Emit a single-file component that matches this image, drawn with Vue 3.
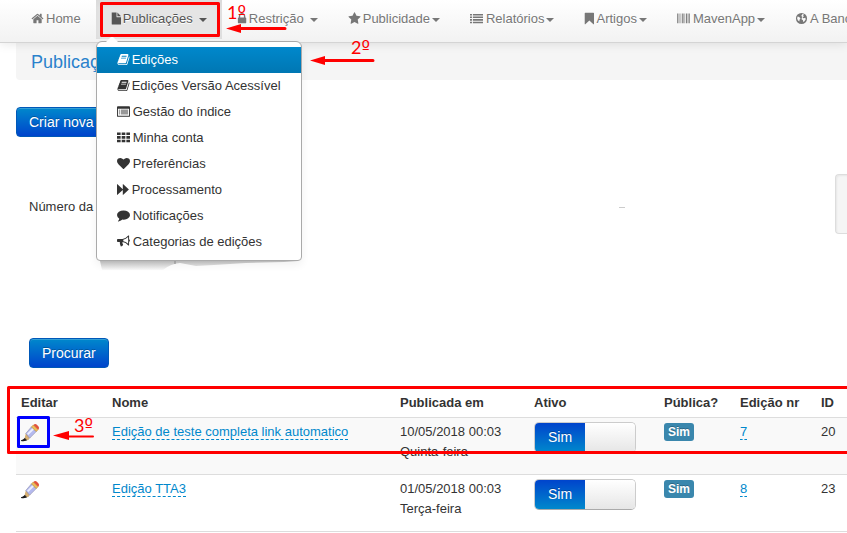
<script setup>
import { ref } from 'vue'

const glyphs = {
  home: 'M1472 992v480q0 26-19 45t-45 19h-384v-384h-256v384h-384q-26 0-45-19t-19-45v-480q0-1 .5-3t.5-3l575-474 575 474q1 2 1 6zm223-69l-62 74q-8 9-21 11h-3q-13 0-21-7l-692-577-692 577q-12 8-24 7-13-2-21-11l-62-74q-8-10-7-23.5t11-21.5l719-599q32-26 76-26t76 26l244 204v-195q0-14 9-23t23-9h192q14 0 23 9t9 23v408l219 182q10 8 11 21.5t-7 23.5z',
  file: 'M100 60H760V640Q760 720 840 720H1380V1640Q1380 1730 1290 1730H190Q100 1730 100 1640ZM880 60L1380 600H880Z',
  lock: 'M440 768h512v-192q0-106-75-181t-181-75-181 75-75 181v192zm832 96v576q0 40-28 68t-68 28h-960q-40 0-68-28t-28-68v-576q0-40 28-68t68-28h32v-192q0-184 132-316t316-132 316 132 132 316v192h32q40 0 68 28t28 68z',
  star: 'M1728 647q0 22-26 48l-363 354 86 500q1 7 1 20 0 21-10.5 35.5t-30.5 14.5q-19 0-40-12l-449-236-449 236q-22 12-40 12-21 0-31.5-14.5t-10.5-35.5q0-6 2-20l86-500-364-354q-25-27-25-48 0-37 56-46l502-73 225-455q19-41 49-41t49 41l225 455 502 73q56 9 56 46z',
  list: 'M0 260H270V470H0ZM400 260H1792V470H400ZM0 620H270V830H0ZM400 620H1792V830H400ZM0 980H270V1190H0ZM400 980H1792V1190H400ZM0 1340H270V1550H0ZM400 1340H1792V1550H400Z',
  bookmark: 'M100 180Q100 100 184 100H1294Q1380 100 1380 180V1640Q1380 1720 1294 1680L740 1170L184 1680Q100 1720 100 1640Z',
  barcode: 'M0 200H110V1550H0ZM220 200H330V1550H220ZM500 200H580V1550H500ZM720 200H900V1550H720ZM1040 200H1120V1550H1040ZM1250 200H1430V1550H1250ZM1530 200H1600V1550H1530ZM1690 200H1792V1550H1690Z',
  globe: 'M896 128A768 768 0 1 0 896 1664A768 768 0 1 0 896 128ZM1020 290L1240 360L1110 510L1230 600L1030 760L1180 850L1420 800L1480 1010L1300 1290L1130 1370L1100 1120L900 1010L940 780L1010 640L860 550ZM360 620L580 690L760 880L620 1060L600 1320L390 1140L290 850Z',
  book: 'M1703 478q40 57 18 129l-275 906q-19 64-76.5 107.5t-122.5 43.5h-923q-77 0-148.5-53.5t-99.5-131.5q-24-67-2-127 0-4 3-27t4-37q1-8-3-21.5t-3-19.5q2-11 8-21t16.5-23.5 16.5-23.5q23-38 45-91.5t30-91.5q3-10 .5-30t-.5-28q3-11 17-28t17-23q21-36 42-92t25-90q1-9-2.5-32t.5-28q4-13 22-30.5t22-22.5q19-26 42.5-84.5t27.5-96.5q1-8-3-25.5t-2-26.5q2-8 9-18t18-23 17-21q8-12 16.5-30.5t15-35 16-36 19.5-32 26.5-23.5 36-11.5 47.5 5.5l-1 3q38-9 51-9h761q74 0 114 56t18 130l-274 906q-36 119-71.5 153.5t-128.5 34.5h-869q-27 0-38 15-11 16-1 43 24 70 144 70h923q29 0 56-15.5t35-41.5l300-987q7-22 5-57 38 15 59 43zm-1064 2q-4 13 2 22.5t20 9.5h608q13 0 25.5-9.5t16.5-22.5l21-64q4-13-2-22.5t-20-9.5h-608q-13 0-25.5 9.5t-16.5 22.5zm-83 256q-4 13 2 22.5t20 9.5h608q13 0 25.5-9.5t16.5-22.5l21-64q4-13-2-22.5t-20-9.5h-608q-13 0-25.5 9.5t-16.5 22.5z',
  index: 'M120 180H1672Q1792 180 1792 300V1500Q1792 1620 1672 1620H120Q0 1620 0 1500V300Q0 180 120 180ZM130 520V1490H1662V520ZM260 640H400V770H260ZM520 640H1530V770H520ZM260 900H400V1030H260ZM520 900H1530V1030H520ZM260 1160H400V1290H260ZM520 1160H1530V1290H520Z',
  grid: 'M0 200H500V560H0ZM646 200H1146V560H646ZM1292 200H1792V560H1292ZM0 700H500V1060H0ZM646 700H1146V1060H646ZM1292 700H1792V1060H1292ZM0 1200H500V1560H0ZM646 1200H1146V1560H646ZM1292 1200H1792V1560H1292Z',
  heart: 'M896 1664q-26 0-44-18l-624-602Q0 800 0 596Q0 376 127 252T478 128Q680 128 896 340Q1112 128 1314 128Q1538 128 1665 252T1792 596Q1792 800 1564 1044L940 1646q-18 18-44 18Z',
  forward: 'M0 190Q0 120 60 170L800 850V190Q800 120 860 170L1640 900L860 1630Q800 1680 800 1610V950L60 1630Q0 1680 0 1610Z',
  comment: 'M1792 830q0 174-120 321.5t-326 233-450 85.5q-70 0-145-8-198 175-460 242-49 14-114 22-17 2-30.5-9t-17.5-29q-4-12 49-64t90-128 48-140Q0 1120 0 830Q0 560 262 375T896 190T1530 375T1792 830Z',
  bullhorn: 'M120 540H760Q1180 500 1560 60H1664V1440H1560Q1220 1010 760 960Q700 1120 850 1350Q760 1600 530 1600Q350 1300 390 970H120Q0 970 0 860V650Q0 540 120 540ZM870 640V860Q1220 920 1530 1200V280Q1230 590 870 640ZM1640 590Q1792 600 1792 760T1640 930Z'
}

const navItems = [
  { label: 'Home', icon: 'home' },
  { label: 'Publicações', icon: 'file', caret: true, spaced: true, active: true, size: 'narrow' },
  { label: 'Restrição', icon: 'lock', caret: true, spaced: true, size: 'narrow' },
  { label: 'Publicidade', icon: 'star', caret: true },
  { label: 'Relatórios', icon: 'list', caret: true, size: 'wide' },
  { label: 'Artigos', icon: 'bookmark', caret: true, size: 'narrow' },
  { label: 'MavenApp', icon: 'barcode', caret: true, size: 'wide' },
  { label: 'A Banca', icon: 'globe' }
]

const menuItems = [
  { label: 'Edições', icon: 'book', active: true },
  { label: 'Edições Versão Acessível', icon: 'book' },
  { label: 'Gestão do índice', icon: 'index', size: 'wide' },
  { label: 'Minha conta', icon: 'grid', size: 'wide' },
  { label: 'Preferências', icon: 'heart', size: 'wide' },
  { label: 'Processamento', icon: 'forward' },
  { label: 'Notificações', icon: 'comment', size: 'wide' },
  { label: 'Categorias de edições', icon: 'bullhorn', size: 'wide' }
]

const rows = ref([
  { name: 'Edição de teste completa link automatico', date: '10/05/2018 00:03', day: 'Quinta-feira', active: true, issue: 7, id: 20 },
  { name: 'Edição TTA3', date: '01/05/2018 00:03', day: 'Terça-feira', active: true, issue: 8, id: 23 }
])
</script>

<template>
  <div class="page">
    <nav class="navbar">
      <ul class="nav">
        <li v-for="item in navItems" :key="item.label" :class="{ active: item.active }">
          <a href="#" class="nav-link">
            <svg class="icon" :class="item.size" viewBox="0 0 1792 1792" preserveAspectRatio="xMinYMid slice" aria-hidden="true"><path fill-rule="evenodd" :d="glyphs[item.icon]" /></svg>
            <span>{{ item.label }}</span>
            <span v-if="item.caret" class="caret" :class="{ spaced: item.spaced }"></span>
          </a>
          <div v-if="item.active" class="dropdown">
            <ul class="menu">
              <li v-for="entry in menuItems" :key="entry.label">
                <a href="#" class="menu-link" :class="{ selected: entry.active }">
                  <svg class="icon" :class="entry.size" viewBox="0 0 1792 1792" preserveAspectRatio="xMinYMid slice" aria-hidden="true"><path fill-rule="evenodd" :d="glyphs[entry.icon]" /></svg>
                  <span>{{ entry.label }}</span>
                </a>
              </li>
            </ul>
            <svg class="menu-shade" viewBox="0 0 206 14" aria-hidden="true">
              <defs>
                <linearGradient id="shade" x1="0" y1="0" x2="0" y2="1">
                  <stop offset="0" stop-color="#b8b8b8" />
                  <stop offset="1" stop-color="#f8f8f8" />
                </linearGradient>
              </defs>
              <path d="M4 0H202L188 1L150 2L118 4L100 5L84 2Q74 3 67 9H6Z" fill="url(#shade)" />
              <path d="M79 0V3" stroke="#888" />
            </svg>
          </div>
        </li>
      </ul>
    </nav>

    <main class="content">
      <h1 class="title">Publicações</h1>
      <div class="toolbar"><button type="button" class="btn">Criar nova edição</button></div>
      <form class="search" @submit.prevent>
        <div class="fields">
          <label for="issue-number">Número da edição</label>
          <input id="issue-number" type="text" />
          <span class="speck"></span>
          <div class="well"></div>
        </div>
        <button type="submit" class="btn">Procurar</button>
      </form>

      <table class="editions">
        <colgroup>
          <col class="c-edit" /><col class="c-name" /><col class="c-date" /><col class="c-active" /><col class="c-public" /><col class="c-issue" /><col />
        </colgroup>
        <thead>
          <tr><th>Editar</th><th>Nome</th><th>Publicada em</th><th>Ativo</th><th>Pública?</th><th>Edição nr</th><th>ID</th></tr>
        </thead>
        <tbody>
          <tr v-for="row in rows" :key="row.id">
            <td>
              <a href="#" class="edit" aria-label="Editar">
                <svg viewBox="0 0 20 20" aria-hidden="true">
                  <path d="M0 17Q3 17 5 13L8 16Q5 19 0 18Z" fill="#1c1c1c" />
                  <path d="M4 14L5 10L10 14L7 17L5 16Z" fill="#d9b173" />
                  <path d="M5 10L11 3L16 8L9 15Z" fill="#b4b9ee" stroke="#7c7c98" stroke-width=".5" />
                  <path d="M7 11L13 5" stroke="#eceeff" stroke-width="2" />
                  <path d="M11 3L13 1L18 6L16 8Z" fill="#edbd55" stroke="#a97722" stroke-width=".5" />
                  <path d="M13 1Q15 -1 17 1L18 2Q20 4 18 6Z" fill="#e0523c" />
                </svg>
              </a>
            </td>
            <td><a href="#" class="editable">{{ row.name }}</a></td>
            <td>{{ row.date }}<br />{{ row.day }}</td>
            <td>
              <label class="switch">
                <input v-model="row.active" type="checkbox" aria-label="Ativo" />
                <span class="on">Sim</span><span class="off"></span>
              </label>
            </td>
            <td><span class="badge">Sim</span></td>
            <td><a href="#" class="editable">{{ row.issue }}</a></td>
            <td>{{ row.id }}</td>
          </tr>
        </tbody>
      </table>
    </main>

    <svg class="notes">
      <g fill="none" stroke="#f00" stroke-width="3" stroke-linejoin="round">
        <rect x="101.500" y="3.500" width="117" height="32" />
        <rect x="8.500" y="387.500" width="100%" height="65" />
        <rect x="18.500" y="417.500" width="30" height="29" stroke="#00f" />
        <path d="M238 28.500H285M322 60.500H373" stroke-linecap="round" />
        <path d="M66 436.500H93" stroke-width="2" stroke-linecap="round" />
      </g>
      <path d="M226 28.500L241 24V33ZM310 60.500L325 56V65ZM53 435.500L69 431V440Z" fill="#f00" />
      <g class="note-text">
        <text x="227" y="19">1<tspan class="ordinal">º</tspan></text>
        <text x="351" y="54">2<tspan class="ordinal">º</tspan></text>
        <text x="74" y="432">3<tspan class="ordinal">º</tspan></text>
      </g>
    </svg>
  </div>
</template>

<style>
html, body { background: #fff; }
body { overflow-x: hidden; }
</style>

<style scoped>
.page {
  position: relative;
  overflow: hidden;
  font: 13px/20px "Liberation Sans", Arial, sans-serif;
  color: #333;
}
a { color: #08c; text-decoration: none; }
ul { list-style: none; margin: 0; padding: 0; }
.navbar {
  position: relative;
  z-index: 2;
  height: 42px;
  padding-left: 16px;
  border-bottom: 1px solid #d4d4d4;
  background: linear-gradient(#fff, #f2f2f2);
  box-shadow: 0 1px 10px rgba(0, 0, 0, .1);
}
.nav { display: flex; white-space: nowrap; }
.nav > li { position: relative; flex: none; }
.nav-link {
  display: flex;
  align-items: center;
  padding: 9px 15px 10px;
  color: #777;
  text-shadow: 0 1px 0 #fff;
}
.active .nav-link { background: #e5e5e5; color: #555; box-shadow: inset 0 3px 8px rgba(0, 0, 0, .06); }
.icon { width: 12px; height: 13px; margin: 0 3px 2px 0; flex: none; fill: currentColor; overflow: visible; }
.icon.wide { width: 13px; }
.icon.narrow { width: 10px; margin-right: 2px; }
.caret {
  margin: 2px 0 0 2px;
  border: 4px solid transparent;
  border-top-color: currentColor;
  border-bottom: 0;
}
.caret.spaced { margin-left: 6px; }
.dropdown { position: absolute; top: 41px; left: 0; width: 206px; }
.menu {
  padding: 5px 0;
  border: 1px solid #aaa;
  border-radius: 6px 6px 4px 4px;
  background: #fff;
  box-shadow: 0 4px 8px rgba(0, 0, 0, .06);
}
.dropdown::before {
  content: "";
  position: absolute;
  top: -5px;
  left: 10px;
  border: 6px solid transparent;
  border-top: 0;
  border-bottom-color: #fff;
}
.menu-link {
  display: flex;
  align-items: center;
  padding: 3px 20px;
  color: #333;
}
.menu-link.selected { color: #fff; background: linear-gradient(#08c, #0077b3); }
.menu-shade { display: block; width: 100%; height: 14px; }
.content { padding-left: 16px; }
.title {
  margin: 0 0 27px;
  padding: 9px 15px 8px;
  border-radius: 0 0 0 4px;
  background: #f5f5f5;
  color: #2a82cc;
  font-size: 18px;
  font-weight: 400;
  line-height: 20px;
}
.btn {
  padding: 4px 12px;
  border: 1px solid #0058b8;
  border-radius: 4px;
  background: linear-gradient(#08c, #04c);
  color: #fff;
  font: 14px/20px "Liberation Sans", Arial, sans-serif;
  text-shadow: 0 -1px 0 rgba(0, 0, 0, .25);
  box-shadow: inset 0 1px 0 rgba(255, 255, 255, .2);
}
.toolbar { display: flex; }
.search { padding: 37px 0 20px 13px; }
.fields { display: flex; align-items: center; margin-bottom: 104px; }
.fields input { width: 100px; margin-left: 10px; height: 20px; box-sizing: border-box; border: 1px solid #ccc; border-radius: 4px; }
.fields label { width: 140px; padding-top: 6px; }
.speck { width: 6px; height: 1px; margin: 6px auto 0 340px; background: #ccc; }
.well {
  width: 11px;
  height: 58px;
  border: 1px solid #ddd;
  border-right: 0;
  border-radius: 4px 0 0 4px;
  background: #f5f5f5;
  box-shadow: inset 1px 1px 2px rgba(0, 0, 0, .06);
}
.editions { width: 100%; table-layout: fixed; border-collapse: separate; border-spacing: 0; }
.c-edit { width: 91px; }
.c-name { width: 288px; }
.c-date { width: 134px; }
.c-active { width: 130px; }
.c-public { width: 76px; }
.c-issue { width: 81px; }
th, td { padding: 4px 5px; text-align: left; vertical-align: top; white-space: nowrap; }
th { padding: 5px 5px 4px; }
td { height: 48px; border-top: 1px solid #ddd; }
tbody tr:nth-child(odd) td { background: #f9f9f9; }
tbody tr:last-child td { border-bottom: 1px solid #ddd; }
.editable { border-bottom: 1px dashed #08c; }
.edit { display: block; padding-top: 2px; }
.edit svg { display: block; width: 19px; height: 19px; overflow: visible; }
.switch {
  position: relative;
  display: flex;
  width: 100px;
  height: 29px;
  border: 1px solid #ccc;
  border-bottom-color: #aaa;
  border-radius: 5px;
  overflow: hidden;
  font-size: 14px;
  line-height: 29px;
}
.switch input { position: absolute; inset: 0; margin: 0; opacity: 0; }
.on { flex: 1; text-align: center; color: #fff; background: linear-gradient(#04c, #08c); text-shadow: 0 -1px 0 rgba(0, 0, 0, .25); }
.off { flex: 1; background: linear-gradient(#fff, #e6e6e6); }
.badge {
  display: inline-block;
  margin-top: 1px;
  padding: 0 4px;
  border-radius: 3px;
  background: #3a87ad;
  color: #fff;
  font-size: 12px;
  font-weight: 700;
  line-height: 18px;
  text-shadow: 0 -1px 0 rgba(0, 0, 0, .25);
}
.notes { position: absolute; z-index: 3; inset: 0; width: 100%; height: 100%; pointer-events: none; }
.note-text { fill: #f00; font: 18px Lato, sans-serif; }
.ordinal { font-family: "DejaVu Sans", sans-serif; }
</style>
